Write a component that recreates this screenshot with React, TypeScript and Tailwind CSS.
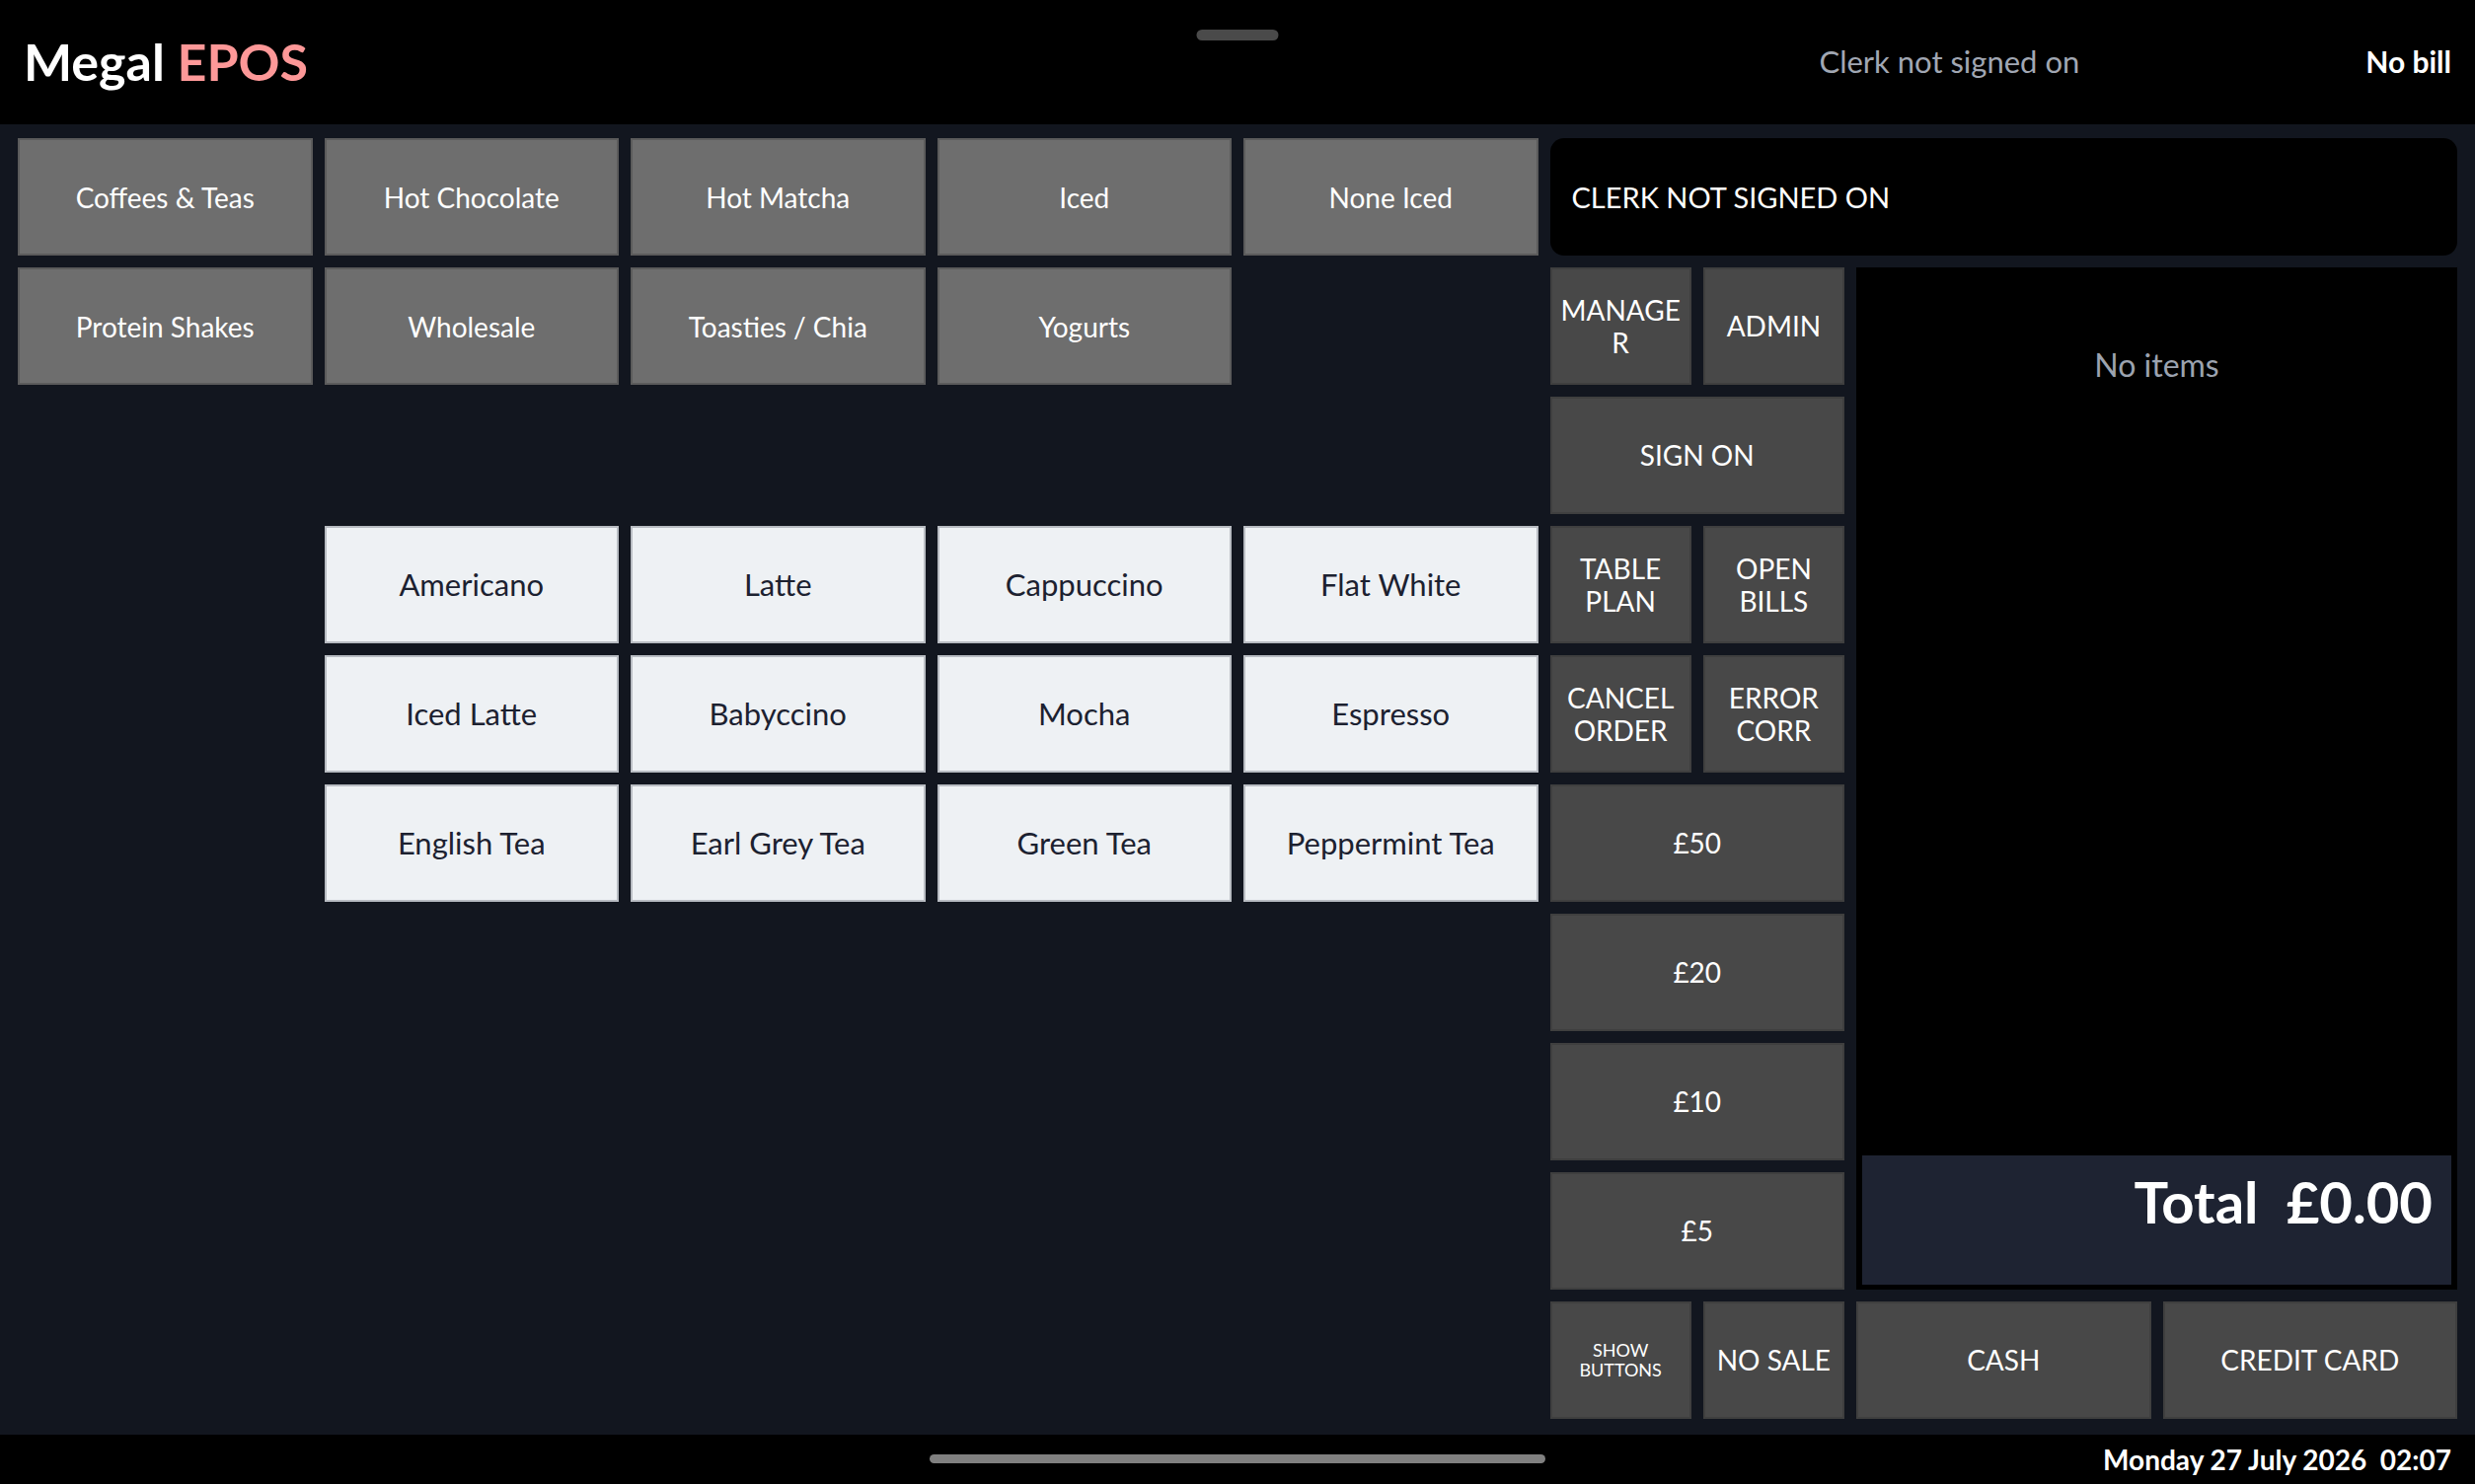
import type { ReactNode } from 'react'

const categories = [
  'Coffees & Teas',
  'Hot Chocolate',
  'Hot Matcha',
  'Iced',
  'None Iced',
  'Protein Shakes',
  'Wholesale',
  'Toasties / Chia',
  'Yogurts',
]

const products = [
  'Americano',
  'Latte',
  'Cappuccino',
  'Flat White',
  'Iced Latte',
  'Babyccino',
  'Mocha',
  'Espresso',
  'English Tea',
  'Earl Grey Tea',
  'Green Tea',
  'Peppermint Tea',
]

const catTile =
  'bg-[#6e6e6e] border-2 border-[#5b5b5b] text-white text-[28px]'
const fnTile =
  'bg-[#484848] border-2 border-[#3f3f3f] text-white text-[28px] leading-[1.15]'
const prodTile =
  'bg-[#eef1f4] border-2 border-[#b8bcc2] text-[#1c2130] text-[31px]'

const Tile = ({ className, children }: { className: string; children: ReactNode }) => (
  <button className={`flex items-center justify-center text-center px-2 min-w-0 ${className}`}>
    {children}
  </button>
)

const App = () => {
  return (
    <div className="h-screen w-full flex flex-col bg-[#12161f] font-['Lato','Liberation_Sans',sans-serif] overflow-hidden relative">
      {/* top bar */}
      <header className="h-[126px] shrink-0 bg-black flex items-center px-6 pb-[2px] relative">
        <div className="absolute left-1/2 -translate-x-1/2 top-[30px] w-[83px] h-[11px] rounded-full bg-[#4a4a4a]" />
        <h1 className="text-[52px] font-bold text-white leading-none">
          Megal <span className="text-[#fd9898]">EPOS</span>
        </h1>
        <span className="ml-auto mr-[290px] text-[31px] text-[#a1a7b3]">Clerk not signed on</span>
        <span className="text-[30px] font-bold text-white">No bill</span>
      </header>

      <main className="flex-1 grid grid-cols-8 grid-rows-10 gap-3 pt-[14px] pb-[16px] px-[18px]">
        {categories.slice(0, 5).map((c) => (
          <Tile key={c} className={`${catTile} row-start-1`}>
            {c}
          </Tile>
        ))}
        <div className="col-start-6 col-span-3 row-start-1 bg-black rounded-[14px] flex items-center px-[22px] text-white text-[29px]">
          CLERK NOT SIGNED ON
        </div>

        {categories.slice(5).map((c) => (
          <Tile key={c} className={`${catTile} row-start-2`}>
            {c}
          </Tile>
        ))}

        {/* function column */}
        <div className="col-start-6 row-start-2 grid grid-cols-2 gap-3">
          <Tile className={fnTile}>
            MANAGE
            <br />R
          </Tile>
          <Tile className={fnTile}>ADMIN</Tile>
        </div>
        <Tile className={`${fnTile} col-start-6 row-start-3`}>SIGN ON</Tile>
        <div className="col-start-6 row-start-4 grid grid-cols-2 gap-3">
          <Tile className={fnTile}>
            TABLE
            <br />
            PLAN
          </Tile>
          <Tile className={fnTile}>
            OPEN
            <br />
            BILLS
          </Tile>
        </div>
        <div className="col-start-6 row-start-5 grid grid-cols-2 gap-3">
          <Tile className={fnTile}>
            CANCEL
            <br />
            ORDER
          </Tile>
          <Tile className={fnTile}>
            ERROR
            <br />
            CORR
          </Tile>
        </div>
        <Tile className={`${fnTile} col-start-6 row-start-6`}>£50</Tile>
        <Tile className={`${fnTile} col-start-6 row-start-7`}>£20</Tile>
        <Tile className={`${fnTile} col-start-6 row-start-8`}>£10</Tile>
        <Tile className={`${fnTile} col-start-6 row-start-9`}>£5</Tile>
        <div className="col-start-6 row-start-10 grid grid-cols-2 gap-3">
          <Tile className="bg-[#484848] border-2 border-[#3f3f3f] text-white text-[18px] leading-[1.1]">
            SHOW
            <br />
            BUTTONS
          </Tile>
          <Tile className={fnTile}>NO SALE</Tile>
        </div>
        <Tile className={`${fnTile} col-start-7 row-start-10`}>CASH</Tile>
        <Tile className={`${fnTile} col-start-8 row-start-10`}>CREDIT CARD</Tile>

        {/* receipt */}
        <div className="col-start-7 col-span-2 row-start-2 row-span-8 bg-black flex flex-col">
          <div className="flex-1 pt-[75px] text-center text-[32px] text-[#9ca3af]">No items</div>
          <div className="h-[131px] mx-[6px] mb-[5px] bg-[#1e2332] flex justify-end items-start pt-[18px] pr-[19px]">
            <span className="text-[58px] font-bold text-white leading-none whitespace-pre">Total  £0.00</span>
          </div>
        </div>

        {/* products */}
        {products.map((p, i) => (
          <Tile
            key={p}
            className={`${prodTile} ${
              i < 4 ? 'row-start-4' : i < 8 ? 'row-start-5' : 'row-start-6'
            } ${
              i % 4 === 0
                ? 'col-start-2'
                : i % 4 === 1
                ? 'col-start-3'
                : i % 4 === 2
                ? 'col-start-4'
                : 'col-start-5'
            }`}
          >
            {p}
          </Tile>
        ))}
      </main>

      {/* bottom status bar */}
      <footer className="h-[50px] shrink-0 bg-black flex items-center justify-end px-6 relative">
        <div className="absolute left-1/2 -translate-x-1/2 top-[20px] w-[624px] h-[9px] rounded-full bg-[#808080]" />
        <span className="text-[28px] font-bold text-white whitespace-pre">Monday 27 July 2026  02:07</span>
      </footer>
    </div>
  )
}

export default App
